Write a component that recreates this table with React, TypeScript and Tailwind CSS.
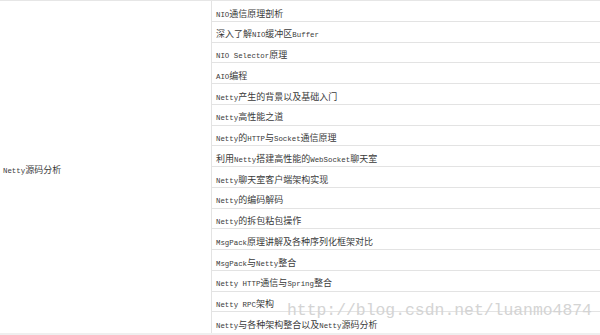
import React from "react";

const items = [
  "NIO通信原理剖析",
  "深入了解NIO缓冲区Buffer",
  "NIO Selector原理",
  "AIO编程",
  "Netty产生的背景以及基础入门",
  "Netty高性能之道",
  "Netty的HTTP与Socket通信原理",
  "利用Netty搭建高性能的WebSocket聊天室",
  "Netty聊天室客户端架构实现",
  "Netty的编码解码",
  "Netty的拆包粘包操作",
  "MsgPack原理讲解及各种序列化框架对比",
  "MsgPack与Netty整合",
  "Netty HTTP通信与Spring整合",
  "Netty RPC架构",
  "Netty与各种架构整合以及Netty源码分析",
];

function Mixed({ text }: { text: string }) {
  const runs: { latin: boolean; s: string }[] = [];
  for (const ch of text) {
    const latin = ch.charCodeAt(0) < 128;
    const last = runs[runs.length - 1];
    if (last && last.latin === latin) last.s += ch;
    else runs.push({ latin, s: ch });
  }
  return (
    <span className="whitespace-pre leading-none">
      {runs.map((r, i) =>
        r.latin ? (
          <span key={i} className="font-['Liberation_Mono',monospace] text-[7.4px]">
            {r.s}
          </span>
        ) : (
          <span key={i} className="font-['Noto_Sans_CJK_SC',sans-serif] text-[9px]">
            {r.s}
          </span>
        )
      )}
    </span>
  );
}

export default function App() {
  return (
    <div className="relative w-[600px] h-[335px] bg-[#efefef] overflow-hidden">
      <div className="flex w-full h-[333px] bg-white border-t border-[#e6e6e6] text-[#3a3a3a]">
        <div className="w-[212px] shrink-0 flex items-center pl-[3px] border-r border-[#e3e3e3]">
          <Mixed text="Netty源码分析" />
        </div>
        <div className="flex-1 flex flex-col">
          {items.map((t, i) => (
            <div
              key={i}
              className="h-[20.75px] box-border flex items-center pl-[4px] border-b border-[#e3e3e3] last:border-b-0"
            >
              <Mixed text={t} />
            </div>
          ))}
        </div>
      </div>
      <div className="absolute left-[287px] top-[303px] font-['Liberation_Mono',monospace] text-[16.4px] leading-none text-[#d4d4d4] whitespace-nowrap pointer-events-none">
        http://blog.csdn.net/luanmo4874
      </div>
    </div>
  );
}
